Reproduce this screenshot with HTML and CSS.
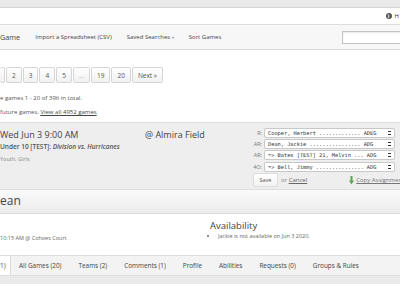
FILE: index.html
```html
<!DOCTYPE html>
<html lang="en">
<head>
    <meta charset="UTF-8">
    <meta name="viewport" content="width=device-width, initial-scale=1.0">
    <title>Games</title>
    <link rel="stylesheet" href="styles.css">
</head>
<body>
    <div class="topbar"></div>
    <div class="utilbar">
        <span class="help-icon">i</span><span class="help-text">H</span>
    </div>

    <div class="navbar">
        <span class="nav-title">Game</span>
        <span class="nav-item">Import a Spreadsheet (CSV)</span>
        <span class="nav-item">Saved Searches <span class="caret">&#9662;</span></span>
        <span class="nav-item">Sort Games</span>
        <input class="search" type="text">
    </div>

    <div class="pagination">
        <span class="page page-cut"></span>
        <span class="page">2</span>
        <span class="page">3</span>
        <span class="page">4</span>
        <span class="page">5</span>
        <span class="page dim">...</span>
        <span class="page">19</span>
        <span class="page">20</span>
        <span class="page">Next &raquo;</span>
    </div>

    <p class="info">e games 1 - 20 of 396 in total.</p>
    <p class="info">future games. <a href="#">View all 4952 games</a></p>

    <div class="game">
        <div class="game-main">
            <div class="game-head">
                <span class="game-date">Wed Jun 3 9:00 AM</span>
                <span class="game-field">@ Almira Field</span>
            </div>
            <div class="game-teams">Under 10 [TEST]: <em>Division vs. Hurricanes</em></div>
            <div class="game-cat">Youth, Girls</div>
        </div>
        <div class="assign">
            <div class="slot"><span class="role">R:</span><span class="pick">Cooper, Herbert ............. ADEG</span></div>
            <div class="slot"><span class="role">AR:</span><span class="pick">Dean, Jackie ................ ADG</span></div>
            <div class="slot"><span class="role">AR:</span><span class="pick">=&gt; Bates [TEST] 21, Melvin ... ADG</span></div>
            <div class="slot"><span class="role">4O:</span><span class="pick">=&gt; Bell, Jimmy ............... ADG</span></div>
            <div class="assign-actions">
                <button class="save">Save</button>
                <span class="or">or <a href="#">Cancel</a></span>
                <span class="copy"><svg width="5" height="9" viewBox="0 0 5 9"><rect x="1.5" y="0" width="2" height="5" fill="#5aa84a"/><path d="M0 4.5 L5 4.5 L2.5 8.5 Z" fill="#5aa84a"/></svg><a href="#">Copy Assignments</a></span>
            </div>
        </div>
    </div>

    <div class="person-head">ean</div>
    <div class="person-body">
        <div class="person-left">10:15 AM @ Cohoes Court</div>
        <div class="person-right">
            <h3>Availability</h3>
            <ul>
                <li>Jackie is not available on Jun 3 2020.</li>
            </ul>
        </div>
    </div>

    <div class="tabs">
        <span class="tab active">1)</span>
        <span class="tab">All Games (20)</span>
        <span class="tab">Teams (2)</span>
        <span class="tab">Comments (1)</span>
        <span class="tab">Profile</span>
        <span class="tab">Abilities</span>
        <span class="tab">Requests (0)</span>
        <span class="tab">Groups &amp; Rules</span>
    </div>
    <div class="tabs-floor"></div>
</body>
</html>
```

FILE: styles.css
```css
body {
    margin: 0;
    width: 400px;
    height: 284px;
    overflow: hidden;
    font-family: "Open Sans", sans-serif;
    color: #555;
    background-color: #fff;
}
a {
    color: #444;
}
.topbar {
    height: 7px;
    background-color: #e9e9e9;
    border-bottom: 1px solid #d4d4d4;
}
.utilbar {
    height: 16px;
    display: flex;
    align-items: center;
    justify-content: flex-end;
    gap: 3px;
    font-size: 6px;
    color: #333;
    border-bottom: 1px solid #ddd;
}
.help-icon {
    width: 6px;
    height: 6px;
    border-radius: 50%;
    background-color: #555;
    color: #fff;
    font-size: 5px;
    line-height: 6px;
    text-align: center;
    font-weight: bold;
}
.help-text {
    padding-right: 1px;
}
.navbar {
    height: 24px;
    display: flex;
    align-items: center;
    gap: 15px;
    background-color: #f7f7f7;
    border-bottom: 1px solid #ddd;
    font-size: 6px;
    color: #444;
}
.nav-title {
    font-size: 7.3px;
    color: #444;
}
.caret {
    font-size: 4px;
    color: #888;
}
.search {
    margin-left: auto;
    width: 60px;
    height: 11px;
    padding: 0;
    margin-right: -4px;
    border: 1px solid #c4c4c4;
    box-shadow: inset 0 1px 2px rgba(0, 0, 0, 0.1);
}
.pagination {
    display: flex;
    gap: 1px;
    margin-top: 17px;
    height: 16px;
}
.page {
    display: flex;
    align-items: center;
    padding: 0 5px;
    border: 1px solid #d6d6d6;
    border-radius: 2px;
    background: linear-gradient(#fff, #f1f1f1);
    font-size: 6.5px;
    color: #555;
}
.page-cut {
    width: 4px;
    padding: 0;
    border-left: none;
}
.page.dim {
    color: #aaa;
}
.info {
    margin: 0;
    height: 14px;
    line-height: 14px;
    font-size: 6px;
    color: #555;
}
.info:first-of-type {
    margin-top: 8px;
}
.game {
    margin-top: 3px;
    height: 66px;
    display: flex;
    background-color: #eee;
    border-top: 1px solid #ddd;
    border-bottom: 1px solid #ddd;
}
.game-main {
    width: 248px;
    flex-shrink: 0;
    padding-top: 4.5px;
}
.game-head {
    display: flex;
    align-items: center;
    height: 13px;
}
.game-date {
    width: 145px;
    font-size: 9px;
    color: #444;
}
.game-field {
    font-size: 9px;
    color: #444;
}
.game-teams {
    font-size: 6.5px;
    font-weight: 600;
    color: #555;
    line-height: 12px;
}
.game-cat {
    font-size: 5.5px;
    color: #888;
    line-height: 12px;
}
.assign {
    padding-top: 4px;
    flex-shrink: 0;
}
.slot {
    display: flex;
    align-items: center;
    height: 11.4px;
}
.role {
    width: 14px;
    text-align: right;
    padding-right: 2px;
    font-size: 5.5px;
    color: #777;
}
.pick {
    position: relative;
    width: 123px;
    height: 8px;
    padding: 0 3px;
    border: 1px solid #c8c8c8;
    border-radius: 2px;
    background-color: #fff;
    font-family: "DejaVu Sans Mono", monospace;
    font-size: 5.3px;
    line-height: 8px;
    color: #333;
    white-space: pre;
    overflow: hidden;
}
.pick::after {
    content: "";
    position: absolute;
    right: 4px;
    top: 2px;
    width: 2px;
    height: 4px;
    border-top: 1.5px dotted #333;
    border-bottom: 1.5px dotted #333;
    box-sizing: border-box;
}
.assign-actions {
    display: flex;
    align-items: center;
    margin-top: 0.5px;
    margin-left: 5px;
    white-space: nowrap;
}
.save {
    flex-shrink: 0;
    width: 25px;
    height: 14px;
    padding: 0;
    border: 1px solid #ddd;
    border-radius: 2px;
    background: linear-gradient(#fff, #f2f2f2);
    font-family: "Open Sans", sans-serif;
    font-size: 5.5px;
    color: #555;
}
.or {
    flex-shrink: 0;
    margin-left: 3px;
    font-size: 6px;
    color: #888;
}
.or a {
    color: #666;
}
.copy {
    flex-shrink: 0;
    margin-left: 42px;
    display: flex;
    align-items: center;
    gap: 2px;
    font-size: 6px;
}
.copy a {
    color: #777;
}
.person-head {
    height: 23px;
    line-height: 22px;
    background: linear-gradient(#fafafa, #ececec);
    border-bottom: 1px solid #ddd;
    font-size: 12px;
    color: #444;
}
.person-body {
    height: 41px;
    display: flex;
    border-bottom: 1px solid #ddd;
}
.person-left {
    width: 210px;
    padding-top: 20px;
    font-size: 5.5px;
    color: #666;
}
.person-right h3 {
    margin: 5px 0 0;
    font-size: 9.5px;
    font-weight: normal;
    color: #444;
}
.person-right ul {
    margin: 0;
    padding-left: 8px;
    font-size: 5.5px;
    color: #666;
}
.tabs {
    display: flex;
    height: 19px;
    background-color: #f3f3f3;
    border-bottom: 1px solid #ddd;
}
.tab {
    display: flex;
    align-items: center;
    padding: 0 8.5px;
    font-size: 6.4px;
    color: #444;
}
.tab.active {
    padding: 0 4px 0 0;
    background-color: #fff;
    border-right: 1px solid #ddd;
}
.tabs-floor {
    height: 10px;
    background-color: #eaeaea;
}
```
